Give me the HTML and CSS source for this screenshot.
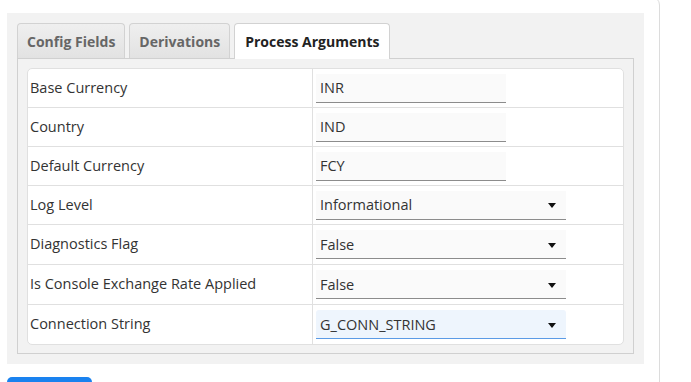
FILE: index.html
```html
<!DOCTYPE html>
<html>
<head>
<meta charset="utf-8">
<link rel="stylesheet" href="styles.css">
</head>
<body>
<div class="card">
  <div class="panel">
    <div class="tabs">
      <div class="tab">Config Fields</div>
      <div class="tab">Derivations</div>
      <div class="tab active">Process Arguments</div>
    </div>
    <div class="tab-body">
      <div class="grid">
        <div class="row r39"><div class="label">Base Currency</div><div class="value"><div class="field text">INR</div></div></div>
        <div class="row r39"><div class="label">Country</div><div class="value"><div class="field text">IND</div></div></div>
        <div class="row r39"><div class="label">Default Currency</div><div class="value"><div class="field text">FCY</div></div></div>
        <div class="row r39"><div class="label">Log Level</div><div class="value"><div class="field select"><span>Informational</span><span class="caret"></span></div></div></div>
        <div class="row r40"><div class="label">Diagnostics Flag</div><div class="value"><div class="field select"><span>False</span><span class="caret"></span></div></div></div>
        <div class="row r40"><div class="label">Is Console Exchange Rate Applied</div><div class="value"><div class="field select"><span>False</span><span class="caret"></span></div></div></div>
        <div class="row r40 last"><div class="label">Connection String</div><div class="value"><div class="field select focus"><span>G_CONN_STRING</span><span class="caret"></span></div></div></div>
      </div>
    </div>
  </div>
  <div class="actions"><div class="btn"></div></div>
</div>
</body>
</html>
```
FILE: styles.css
```css
html, body {
  margin: 0;
  padding: 0;
  background: #ffffff;
  overflow: hidden;
  height: 382px;
}
body {
  font-family: "Open Sans", "Liberation Sans", sans-serif;
  font-size: 14.5px;
  color: #333;
}
.card {
  box-sizing: border-box;
  width: 670px;
  height: 400px;
  margin: -4px 0 0 -10px;
  padding: 16px 16px 0 16px;
  border: 1px solid #dcdcdc;
  border-radius: 9px;
  background: #fff;
  overflow: hidden;
}
.panel {
  background: #f2f2f2;
  padding: 10px;
  width: 637px;
  box-sizing: border-box;
}
.tabs {
  display: flex;
  gap: 4px;
  height: 35px;
  position: relative;
  z-index: 1;
}
.tab {
  box-sizing: border-box;
  height: 35px;
  padding: 0 9px;
  display: flex;
  align-items: center;
  font-weight: 700;
  font-size: 14px;
  color: #666;
  background: linear-gradient(#efefef, #e2e2e2);
  border: 1px solid #d2d2d2;
  border-bottom: none;
  border-radius: 4px 4px 0 0;
}
.tab.active {
  background: #fff;
  color: #222;
  height: 36px;
  padding: 0 10px;
}
.tab-body {
  border: 1px solid #d0d0d0;
  padding: 9px 9px 8px 9px;
  background: #f2f2f2;
}
.grid {
  background: #fff;
  border: 1px solid #e0e0e0;
  border-radius: 5px;
}
.row {
  display: flex;
  box-sizing: border-box;
  border-bottom: 1px solid #e0e0e0;
}
.row.r39 { height: 39px; }
.row.r40 { height: 40px; }
.row.last { border-bottom: none; height: 39px; }
.label {
  box-sizing: border-box;
  width: 285px;
  padding: 0 0 2px 2px;
  border-right: 1px solid #e0e0e0;
  display: flex;
  align-items: center;
  color: #333;
}
.value {
  flex: 1;
  padding-left: 3px;
  display: flex;
  align-items: center;
}
.field {
  box-sizing: border-box;
  height: 29px;
  padding: 0 4px;
  background: #fafafa;
  border-bottom: 1px solid #8c8c8c;
  display: flex;
  align-items: center;
  color: #333;
}
.field.text { width: 190px; }
.field.select {
  width: 250px;
  justify-content: space-between;
  padding-right: 10px;
}
.field.focus {
  background: #eef5fd;
  border-bottom-color: #5b9be6;
  border-radius: 3px 3px 0 0;
}
.caret {
  width: 0;
  height: 0;
  border-left: 4.5px solid transparent;
  border-right: 4.5px solid transparent;
  border-top: 5px solid #111;
  margin-top: 2px;
}
.actions {
  padding-top: 13px;
}
.btn {
  width: 85px;
  height: 30px;
  background: #1a82ef;
  border-radius: 5px;
}
```
